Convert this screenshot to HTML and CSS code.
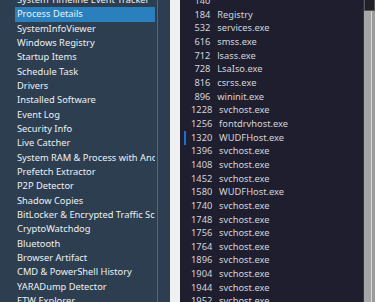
FILE: index.html
```html
<!DOCTYPE html>
<html>
<head>
    <title>Process Details</title>
    <link rel="stylesheet" href="styles.css">
</head>
<body>
    <div class="window">
        <!-- Tool menu on the left -->
        <div class="menu">
            <ul class="menu-list">
                <li>System Timeline Event Tracker</li>
                <li class="selected">Process Details</li>
                <li>SystemInfoViewer</li>
                <li>Windows Registry</li>
                <li>Startup Items</li>
                <li>Schedule Task</li>
                <li>Drivers</li>
                <li>Installed Software</li>
                <li>Event Log</li>
                <li>Security Info</li>
                <li>Live Catcher</li>
                <li>System RAM &amp; Process with Anomaly</li>
                <li>Prefetch Extractor</li>
                <li>P2P Detector</li>
                <li>Shadow Copies</li>
                <li>BitLocker &amp; Encrypted Traffic Scanner</li>
                <li>CryptoWatchdog</li>
                <li>Bluetooth</li>
                <li>Browser Artifact</li>
                <li>CMD &amp; PowerShell History</li>
                <li>YARADump Detector</li>
                <li>ETW Explorer</li>
            </ul>
        </div>

        <div class="spacer"></div>
        <div class="strip"></div>

        <!-- Process list -->
        <div class="procs">
            <ul class="proc-list">
                <li> 140</li>
                <li> 184  Registry</li>
                <li> 532  services.exe</li>
                <li> 616  smss.exe</li>
                <li> 712  lsass.exe</li>
                <li> 728  LsaIso.exe</li>
                <li> 816  csrss.exe</li>
                <li> 896  wininit.exe</li>
                <li>1228  svchost.exe</li>
                <li>1256  fontdrvhost.exe</li>
                <li class="caret">1320  WUDFHost.exe</li>
                <li>1396  svchost.exe</li>
                <li>1408  svchost.exe</li>
                <li>1452  svchost.exe</li>
                <li>1580  WUDFHost.exe</li>
                <li>1740  svchost.exe</li>
                <li>1748  svchost.exe</li>
                <li>1756  svchost.exe</li>
                <li>1764  svchost.exe</li>
                <li>1896  svchost.exe</li>
                <li>1904  svchost.exe</li>
                <li>1944  svchost.exe</li>
                <li>1952  svchost.exe</li>
            </ul>
        </div>

        <!-- Scrollbar -->
        <div class="scrollbar">
            <div class="scroll-cap"></div>
            <div class="scroll-thumb"></div>
        </div>
    </div>
</body>
</html>
```

FILE: styles.css
```css
/* Page */
body {
    margin: 0;
    background-color: #2c3e50;
    font-family: "Noto Sans", "Open Sans", sans-serif;
    overflow: hidden;
}

.window {
    display: flex;
    height: 302px;
    width: 375px;
    overflow: hidden;
}

/* Left menu */
.menu {
    width: 157px;
    flex: none;
    border-right: 1px solid #566779;
    overflow: hidden;
}

.menu-list {
    list-style: none;
    margin: -7px 0 0 0;
    padding: 0 2px 0 15px;
    font-size: 9.3px;
    color: #eef1f4;
}

.menu-list li {
    height: 14.33px;
    line-height: 14.33px;
    padding-left: 2px;
    white-space: nowrap;
    overflow: hidden;
}

.menu-list .selected {
    background-color: #2a80bd;
}

.spacer {
    width: 12px;
    flex: none;
}

.strip {
    width: 10px;
    flex: none;
    background-color: #f0f0f0;
}

/* Process list */
.procs {
    flex: 1;
    background-color: #1e1e2e;
    overflow: hidden;
}

.proc-list {
    list-style: none;
    margin: -6px 0 0 0;
    padding: 0 0 0 11px;
    font-size: 9.3px;
    word-spacing: 1px;
    color: #d3d5dc;
}

.proc-list li {
    position: relative;
    height: 13.67px;
    line-height: 13.67px;
    white-space: pre;
}

/* focus caret beside the current row */
.proc-list .caret::before {
    content: "";
    position: absolute;
    left: -7px;
    top: 0;
    width: 2px;
    height: 14px;
    background-color: #1f6fd1;
}

/* Scrollbar */
.scrollbar {
    width: 11px;
    flex: none;
    border-left: 1px solid #34343c;
    display: flex;
    flex-direction: column;
}

.scroll-cap {
    height: 10px;
    background-color: #202026;
    border: 1px solid #55555c;
    border-top: none;
}

.scroll-thumb {
    flex: 1;
    background-color: #a6a6a6;
    border-right: 3px solid #9a9a9a;
    box-shadow: inset -1px 0 0 #d6d6d6;
}
```
